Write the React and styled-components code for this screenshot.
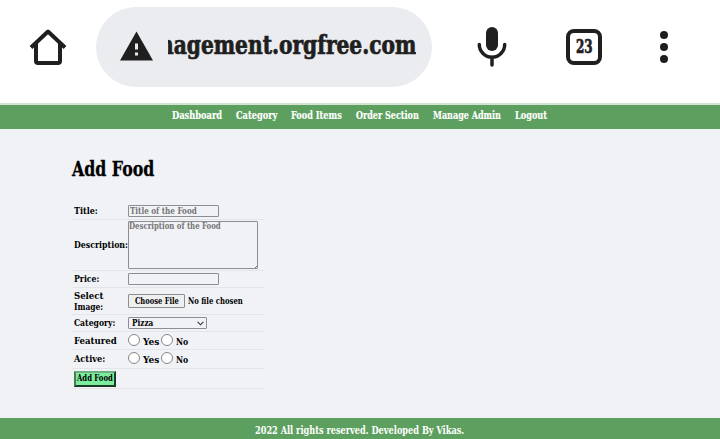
import React, { useLayoutEffect, useRef, useState } from "react";
import styled, { createGlobalStyle } from "styled-components";

const GlobalStyle = createGlobalStyle`
  * { box-sizing: border-box; }
  body {
    margin: 0;
    background: #f0f2f6;
    color: #000;
    font-family: "DejaVu Serif Condensed", "DejaVu Serif", serif;
    font-stretch: condensed;
    font-weight: 700;
  }
`;

const FitBox = styled.span`
  display: block;
  flex: none;
  width: ${(p) => p.$width}px;
  height: ${(p) => p.$size * 1.2}px;
  font-size: ${(p) => p.$size}px;
  line-height: 1.2;
  white-space: nowrap;
  -webkit-text-stroke: ${(p) => p.$stroke}px currentColor;
`;

const FitInner = styled.span`
  display: inline-block;
  transform-origin: 0 50%;
`;

/* Single line of text condensed to an exact width. */
function Fit({ width, size = 10, stroke = 0, children }) {
  const ref = useRef(null);
  const [scale, setScale] = useState(1);
  useLayoutEffect(() => {
    setScale(width / ref.current.offsetWidth);
  }, [width, children]);
  return (
    <FitBox $width={width} $size={size} $stroke={stroke}>
      <FitInner ref={ref} style={{ transform: `scaleX(${scale})` }}>{children}</FitInner>
    </FitBox>
  );
}

const Page = styled.div`
  width: 720px;
  height: 439px;
  display: flex;
  flex-direction: column;
  overflow: hidden;
`;

const BrowserBar = styled.header`
  height: 103px;
  flex: none;
  background: #fff;
  display: flex;
  align-items: flex-start;
  padding: 7px 0 0 28px;
  color: #1f1f1f;
`;

const BarIcon = styled.svg`
  display: block;
  flex: none;
  width: 40px;
  height: 44px;
  margin-top: 18px;
  margin-left: ${(p) => p.$gap || 0}px;
`;

const AddressPill = styled.div`
  width: 336px;
  height: 80px;
  margin-left: 28px;
  border-radius: 40px;
  background: #ebecf0;
  display: flex;
  align-items: center;
  padding-left: 24px;
`;

const WarningIcon = styled.svg`
  display: block;
  width: 33px;
  height: 30px;
  margin-top: -3px;
`;

const UrlClip = styled.div`
  width: 248px;
  margin-left: 15px;
  margin-top: -3px;
  overflow: hidden;
  display: flex;
  justify-content: flex-end;
`;

const TabCount = styled.div`
  width: 36px;
  height: 36px;
  margin: 22px 0 0 54px;
  border: 4px solid #1f1f1f;
  border-radius: 8px;
  display: flex;
  align-items: center;
  justify-content: center;
`;

const Nav = styled.nav`
  height: 26px;
  flex: none;
  border-top: 2px solid #d3e4d5;
  background: #5d9f5e;
  color: #fff;
  display: flex;
  padding: 4px 0 0 172px;
  gap: 14px;
`;

const Main = styled.main`
  flex: 1;
  padding: 27px 0 0 72px;
`;

const Title = styled.h1`
  margin: 0;
  height: 47px;
`;

const FormTable = styled.form`
  width: 192px;
  margin: 0;
`;

const Row = styled.div`
  height: ${(p) => p.$height}px;
  border-bottom: 1px solid #e3e5e9;
  display: grid;
  grid-template-columns: 54px 1fr;
  align-items: center;
  padding-left: 2px;
`;

const Field = styled.div`
  display: flex;
  align-items: center;
`;

const TextBox = styled.div`
  width: ${(p) => p.$width || 91}px;
  height: ${(p) => p.$height || 12}px;
  border: 1px solid #8d8e91;
  border-radius: 1px;
  color: #757575;
  padding-left: ${(p) => p.$inset || 0}px;
  display: flex;
  align-items: ${(p) => (p.$top ? "flex-start" : "center")};
  justify-content: space-between;
`;

const PlaceholderTop = styled.span`
  margin-top: -1px;
`;

const ResizeGrip = styled.svg`
  width: 2px;
  height: 2px;
  align-self: flex-end;
`;

const FileButton = styled.div`
  width: 57px;
  height: 14px;
  margin-right: 3px;
  border: 1px solid #8d8e91;
  border-radius: 1px;
  background: #efefef;
  display: flex;
  align-items: center;
  justify-content: center;
`;

const SelectBox = styled.div`
  width: 79px;
  height: 12px;
  border: 1px solid #8d8e91;
  border-radius: 1px;
  display: flex;
  align-items: center;
  justify-content: space-between;
  padding: 0 2px 0 3px;
`;

const Chevron = styled.svg`
  width: 7px;
  height: 5px;
`;

const Radio = styled.span`
  width: 12px;
  height: 12px;
  flex: none;
  margin-top: -2px;
  border: 1px solid #858689;
  border-radius: 50%;
  background: #fff;
`;

const RadioLabel = styled.span`
  margin: 2px 2px 0 3px;
`;

const SubmitButton = styled.div`
  width: 42px;
  height: 16px;
  border: 2px solid;
  border-color: #6fae80 #1c3926 #1c3926 #467d56;
  background: #7bed9f;
  display: flex;
  align-items: center;
  justify-content: center;
`;

const Footer = styled.footer`
  height: 21px;
  flex: none;
  background: #5d9f5e;
  color: #fff;
  display: flex;
  padding: 6px 0 0 255px;
`;

const navItems = [
  ["Dashboard", 50],
  ["Category", 41],
  ["Food Items", 51],
  ["Order Section", 63],
  ["Manage Admin", 68],
  ["Logout", 32],
];

function Choices() {
  return (
    <Field>
      <Radio />
      <RadioLabel><Fit width={16}>Yes</Fit></RadioLabel>
      <Radio />
      <RadioLabel><Fit width={12}>No</Fit></RadioLabel>
    </Field>
  );
}

export default function App() {
  return (
    <Page>
      <GlobalStyle />
      <BrowserBar>
        <BarIcon viewBox="0 0 40 44" fill="none" stroke="#1f1f1f" strokeWidth="4" strokeLinejoin="round">
          <path d="M3 22.5 20 6.5 37 22.5" />
          <path d="M8 18V36Q8 38 10 38H30Q32 38 32 36V18" />
        </BarIcon>
        <AddressPill>
          <WarningIcon viewBox="0 0 33 30">
            <path d="M16.5 0.5 33 29.5H0Z" fill="#1f1f1f" />
            <path d="M15 12.5h3v6h-3zM15 21.5h3v3h-3z" fill="#ebecf0" />
          </WarningIcon>
          <UrlClip><Fit width={257} size={25.5} stroke={0.7}>nagement.orgfree.com</Fit></UrlClip>
        </AddressPill>
        <BarIcon $gap={40} viewBox="0 0 40 44">
          <rect x="14" y="2" width="12" height="24" rx="6" fill="#1f1f1f" />
          <path d="M7.3 19.5A12.7 12.7 0 0 0 32.7 19.5M20 32V40" fill="none" stroke="#1f1f1f" strokeWidth="3.5" strokeLinecap="round" />
        </BarIcon>
        <TabCount><Fit width={17} size={18} stroke={0.7}>23</Fit></TabCount>
        <BarIcon $gap={42} viewBox="0 0 40 44" fill="#1f1f1f">
          <circle cx="20" cy="10" r="4" />
          <circle cx="20" cy="22" r="4" />
          <circle cx="20" cy="34" r="4" />
        </BarIcon>
      </BrowserBar>
      <Nav>
        {navItems.map(([label, width]) => (
          <Fit key={label} width={width} size={10.5} stroke={0.15}>{label}</Fit>
        ))}
      </Nav>
      <Main>
        <Title><Fit width={82} size={21} stroke={0.3}>Add Food</Fit></Title>
        <FormTable>
          <Row $height={17}>
            <Fit width={24}>Title:</Fit>
            <TextBox $inset={1}><Fit width={67} size={8.5}>Title of the Food</Fit></TextBox>
          </Row>
          <Row $height={51}>
            <Fit width={54}>Description:</Fit>
            <TextBox $width={130} $height={48} $top>
              <PlaceholderTop><Fit width={92} size={8.5}>Description of the Food</Fit></PlaceholderTop>
              <ResizeGrip viewBox="0 0 2 2"><path d="M0 2 2 0" stroke="#777" /></ResizeGrip>
            </TextBox>
          </Row>
          <Row $height={17}>
            <Fit width={25}>Price:</Fit>
            <TextBox />
          </Row>
          <Row $height={27}>
            <div>
              <Fit width={29} size={9.5}>Select</Fit>
              <Fit width={29} size={9.5}>Image:</Fit>
            </div>
            <Field>
              <FileButton><Fit width={44} size={8.5}>Choose File</Fit></FileButton>
              <Fit width={55} size={8.5}>No file chosen</Fit>
            </Field>
          </Row>
          <Row $height={17}>
            <Fit width={41}>Category:</Fit>
            <SelectBox>
              <Fit width={21} size={8.5}>Pizza</Fit>
              <Chevron viewBox="0 0 7 5"><path d="M.6 .8 3.5 3.8 6.4 .8" fill="none" stroke="#333" strokeWidth="1.1" /></Chevron>
            </SelectBox>
          </Row>
          <Row $height={18}>
            <Fit width={43}>Featured</Fit>
            <Choices />
          </Row>
          <Row $height={19}>
            <Fit width={31}>Active:</Fit>
            <Choices />
          </Row>
          <Row $height={20}>
            <SubmitButton><Fit width={36} size={8.5}>Add Food</Fit></SubmitButton>
          </Row>
        </FormTable>
      </Main>
      <Footer><Fit width={209} size={10.5}>2022 All rights reserved. Developed By Vikas.</Fit></Footer>
    </Page>
  );
}
